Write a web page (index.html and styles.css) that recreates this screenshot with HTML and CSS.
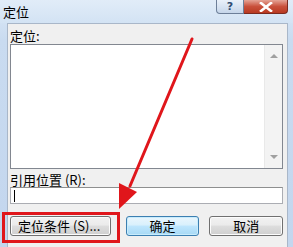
FILE: index.html
```html
<!DOCTYPE html>
<html lang="zh-CN">

<head>
  <meta charset="UTF-8">
  <title>定位</title>
  <link rel="stylesheet" href="styles.css">
</head>

<body>
  <div class="window">
    <div class="titleBar">
      <span class="title">定位</span>
      <div class="capButtons">
        <span class="capHelp">?</span>
        <span class="capClose">
          <svg width="14" height="10" viewBox="0 0 14 10">
            <path d="M2 1 L12 9 M12 1 L2 9" stroke="#fff" stroke-width="2.6" stroke-linecap="square" fill="none" />
          </svg>
        </span>
      </div>
    </div>

    <div class="client">
      <div class="label">定位:</div>
      <div class="listBox">
        <div class="listArea"></div>
        <div class="scrollBar">
          <span class="arrowUp"></span>
          <span class="arrowDown"></span>
        </div>
      </div>

      <div class="label label2">引用位置 (<u>R</u>):</div>
      <div class="refInput"><span class="caret"></span></div>

      <div class="buttonRow">
        <button class="dlgButton wide">定位条件 (<u>S</u>)...</button>
        <button class="dlgButton default">确定</button>
        <button class="dlgButton">取消</button>
      </div>
    </div>

    <!-- annotation drawn over the dialog -->
    <div class="markBox"></div>
    <svg class="markArrow" width="293" height="247" viewBox="0 0 293 247">
      <line x1="192" y1="39" x2="130" y2="186" stroke="#e0161b" stroke-width="3" stroke-linecap="round" />
      <polygon points="119,209 119,183 137,192" fill="#e0161b" />
    </svg>
  </div>
</body>

</html>
```

FILE: styles.css
```css
body {
  margin: 0;
  width: 293px;
  height: 247px;
  overflow: hidden;
  font-family: "Noto Sans CJK SC", "Liberation Sans", sans-serif;
  font-size: 13px;
  color: #000;
}

.window {
  position: relative;
  height: 247px;
  background: linear-gradient(to bottom, #dce9f7, #c9dbf0 40px, #c3d6ee);
  display: flex;
  flex-direction: column;
}

.titleBar {
  height: 23px;
  display: flex;
  justify-content: space-between;
  align-items: flex-start;
  background: linear-gradient(to bottom, #e1ecf8, #d3e3f4);
}

.title {
  font-size: 13px;
  line-height: 15px;
  padding: 4px 0 0 3px;
}

.capButtons {
  display: flex;
  margin-right: 5px;
}

.capHelp,
.capClose {
  height: 14px;
  display: flex;
  align-items: center;
  justify-content: center;
  box-sizing: border-box;
  border: 1px solid #6d7f99;
  border-top: none;
}

.capHelp {
  width: 28px;
  border-radius: 0 0 0 4px;
  background: linear-gradient(to bottom, #eaf1fa, #c6d6ea);
  color: #2f4c72;
  font-family: "DejaVu Sans", sans-serif;
  font-size: 11px;
  font-weight: bold;
  line-height: 12px;
}

.capClose {
  width: 44px;
  border-left: none;
  border-color: #7a2a1f;
  border-radius: 0 0 4px 0;
  background: linear-gradient(to bottom, #e5a496, #c9503b 50%, #b83a22);
}

.client {
  flex: 1;
  margin: 0 5px 0 7px;
  padding: 5px 4px 0 2px;
  background: #f0f0f0;
  border-top: 1px solid #a9b7c9;
  border-left: 1px solid #a9b7c9;
  border-right: 1px solid #a9b7c9;
  display: flex;
  flex-direction: column;
}

.label {
  height: 15px;
  line-height: 14px;
}

.label2 {
  margin-top: 5px;
  height: 13px;
  line-height: 12px;
}

.label u,
.dlgButton u {
  text-decoration: none;
}

.listBox {
  height: 125px;
  box-sizing: border-box;
  border: 1px solid #828790;
  background: #fff;
  display: flex;
}

.listArea {
  flex: 1;
}

.scrollBar {
  width: 17px;
  background: #f3f3f3;
  border-left: 1px solid #e9e9e9;
  display: flex;
  flex-direction: column;
  justify-content: space-between;
  align-items: center;
  padding: 9px 0 9px;
}

.arrowUp,
.arrowDown {
  width: 0;
  height: 0;
  border-left: 4px solid transparent;
  border-right: 4px solid transparent;
}

.arrowUp {
  border-bottom: 4px solid #a0a0a0;
}

.arrowDown {
  border-top: 4px solid #a0a0a0;
}

.refInput {
  height: 17px;
  box-sizing: border-box;
  border: 1px solid #abadb3;
  border-top-color: #8e8f8f;
  background: #fff;
  padding: 2px 0 0 3px;
}

.caret {
  display: block;
  width: 1px;
  height: 12px;
  background: #000;
}

.buttonRow {
  display: flex;
  margin-top: 12px;
}

.dlgButton {
  height: 20px;
  width: 74px;
  margin-left: 10px;
  padding: 0;
  font-family: inherit;
  font-size: 13px;
  line-height: 16px;
  color: #000;
  border: 1px solid #707070;
  border-radius: 3px;
  background: linear-gradient(to bottom, #f2f2f2, #ebebeb 45%, #dddddd 50%, #cfcfcf);
  box-shadow: inset 0 0 0 1px #fcfcfc;
}

.dlgButton.wide {
  width: 101px;
  margin-left: 0;
  margin-right: 5px;
  text-align: left;
  padding-left: 7px;
}

.dlgButton.default {
  border-color: #3c7fb1;
  background: linear-gradient(to bottom, #eaf6fd, #d9f0fc 45%, #bee6fd 50%, #a7d9f5);
  box-shadow: inset 0 0 0 1px #c8ecfc;
}

.markBox {
  position: absolute;
  left: 2px;
  top: 212px;
  width: 112px;
  height: 25px;
  border: 3px solid #e0161b;
}

.markArrow {
  position: absolute;
  left: 0;
  top: 0;
  pointer-events: none;
}
```
